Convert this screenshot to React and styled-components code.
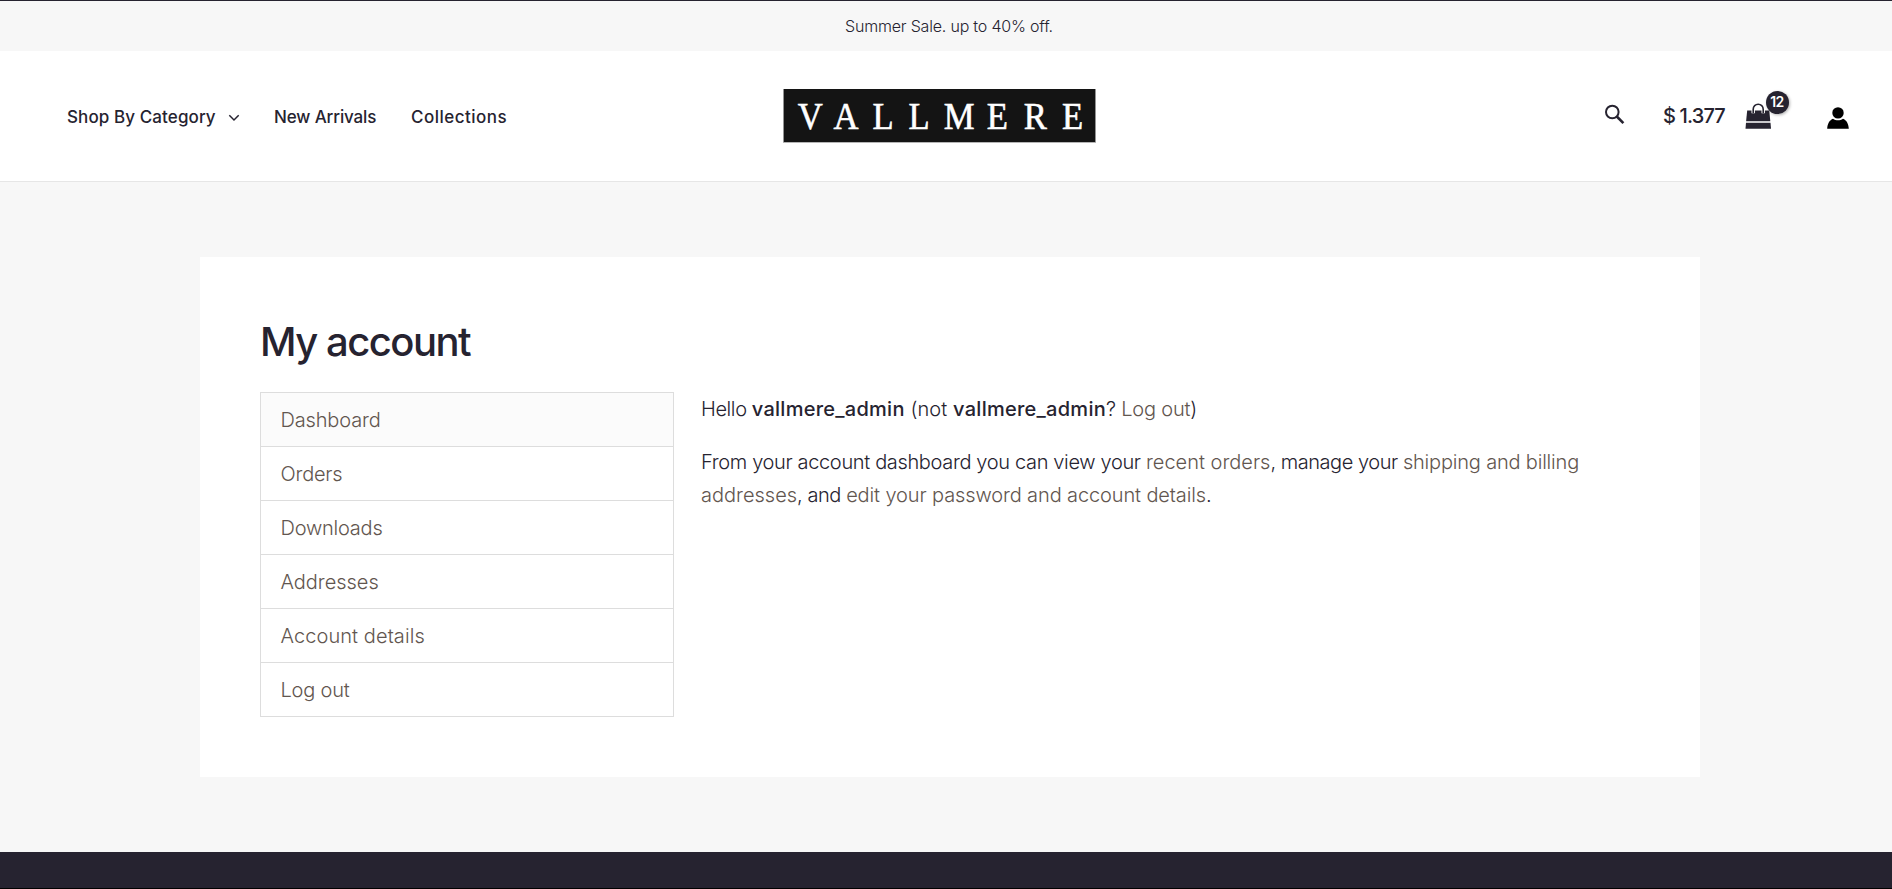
import React from 'react';
import styled, { createGlobalStyle } from 'styled-components';

const ink = '#262330';
const brown = '#62564f';

const GlobalStyle = createGlobalStyle`
  * { box-sizing: border-box; }
  body {
    margin: 0;
    background: #f7f7f7;
    color: ${ink};
    font-family: Inter, "Liberation Sans", sans-serif;
    font-weight: 300;
    overflow: hidden;
  }
`;

const Page = styled.div`
  display: flex;
  flex-direction: column;
  height: 889px;
  border-top: 1px solid ${ink};
`;

const Announcement = styled.div`
  height: 50px;
  flex: none;
  display: flex;
  align-items: center;
  justify-content: center;
  padding-left: 6px;
  font-size: 16px;
  letter-spacing: -0.2px;
`;

const Header = styled.header`
  height: 131px;
  flex: none;
  display: grid;
  grid-template-columns: 783px 313px 1fr;
  align-items: center;
  background: #fff;
  border-bottom: 1px solid #e6e6e6;
`;

const Nav = styled.nav`
  display: flex;
  align-items: center;
  padding: 2px 0 0 67px;
  font-size: 17px;
  font-weight: 500;
  line-height: 24px;
`;

const NavLink = styled.a`
  display: flex;
  align-items: center;
  width: ${(p) => p.$width}px;
  letter-spacing: ${(p) => p.$tracking}px;
  white-space: nowrap;
`;

const Chevron = styled.svg`
  margin: 2px 0 0 12px;
`;

const Logo = styled.svg`
  display: block;
  margin-bottom: 1px;
`;

const Actions = styled.div`
  display: flex;
  align-items: center;
  height: 60px;
`;

const SearchIcon = styled.svg`
  margin: 0 38px 4px 508px;
`;

const Price = styled.span`
  width: 82px;
  font-size: 20px;
  font-weight: 500;
  letter-spacing: -0.85px;
  white-space: nowrap;
`;

const Cart = styled.div`
  position: relative;
  width: 82px;
  height: 26px;
`;

const Badge = styled.span`
  position: absolute;
  left: 20.5px;
  top: -12px;
  width: 23px;
  height: 23px;
  border-radius: 50%;
  background: ${ink};
  color: #fff;
  font-size: 14px;
  font-weight: 600;
  line-height: 22px;
  text-align: center;
  letter-spacing: -0.6px;
  box-shadow: 1px 1px 3px rgba(0, 0, 0, 0.3);
`;

const UserIcon = styled.svg`
  margin-top: 4px;
`;

const Main = styled.main`
  flex: 1;
  padding: 75px 192px 0 200px;
`;

const Card = styled.section`
  height: 520px;
  padding: 60px;
  background: #fff;
`;

const Title = styled.h1`
  margin: 0;
  font-size: 40px;
  font-weight: 500;
  line-height: 49px;
  letter-spacing: -1.5px;
`;

const Columns = styled.div`
  display: flex;
  margin-top: 26px;
  gap: 27px;
`;

const Menu = styled.ul`
  width: 414px;
  margin: 0;
  padding: 0;
  list-style: none;
  border: 1px solid #dddddd;
  font-size: 20px;
  color: ${brown};
`;

const MenuItem = styled.li`
  height: ${(p) => (p.$last ? 53 : 54)}px;
  padding-left: 19.5px;
  line-height: 55px;
  letter-spacing: ${(p) => p.$tracking}px;
  background: ${(p) => (p.$active ? '#fbfbfb' : '#fff')};
  border-bottom: ${(p) => (p.$last ? 0 : 1)}px solid #dddddd;
`;

const Content = styled.div`
  flex: 1;
  padding-top: 1px;
  font-size: 20px;
  line-height: 33px;
`;

const Paragraph = styled.p`
  margin: 0 0 20px;
`;

const Run = styled.span`
  letter-spacing: ${(p) => p.$tracking}px;
`;

const Name = styled.strong`
  font-weight: 500;
  letter-spacing: 0.26px;
`;

const Link = styled.a`
  color: ${brown};
  letter-spacing: ${(p) => p.$tracking}px;
`;

const Footer = styled.footer`
  height: 37px;
  flex: none;
  background: ${ink};
  border-bottom: 1px solid #000;
`;

const menu = [
  ['Dashboard', -0.15],
  ['Orders', -0.2],
  ['Downloads', -0.22],
  ['Addresses', -0.03],
  ['Account details', 0.08],
  ['Log out', -0.18],
];

export default function App() {
  return (
    <Page>
      <GlobalStyle />
      <Announcement>Summer Sale. up to 40% off.</Announcement>
      <Header>
        <Nav>
          <NavLink $width={207} $tracking={0.1}>
            Shop By Category
            <Chevron width="12" height="8" viewBox="0 0 12 8" fill="none" stroke={ink} strokeWidth="1.5">
              <path d="M1.3 1.3 6 6l4.7-4.7" />
            </Chevron>
          </NavLink>
          <NavLink $width={137} $tracking={-0.13}>New Arrivals</NavLink>
          <NavLink $width={100} $tracking={0.48}>Collections</NavLink>
        </Nav>
        <Logo width="313" height="54" viewBox="0 0 313 54">
          <rect width="313" height="54" fill="#b5b5b5" />
          <rect x="0.8" width="311.4" height="53" fill="#141414" />
          <text
            transform="scale(.9 1)"
            x="16.5 56 99.5 139.5 178.5 226.5 267.5 310"
            y="40"
            fill="#fff"
            stroke="#fff"
            strokeWidth="0.6"
            fontFamily="'Liberation Serif', serif"
            fontSize="38.5"
          >
            VALLMERE
          </text>
        </Logo>
        <Actions>
          <SearchIcon width="21" height="21" viewBox="0 0 21 21" fill="none" stroke={ink}>
            <circle cx="8.3" cy="8" r="6.3" strokeWidth="2" />
            <path d="m12.8 12.5 6.6 6.6" strokeWidth="2.6" />
          </SearchIcon>
          <Price>$ 1.377</Price>
          <Cart>
            <svg width="27" height="26" viewBox="0 0 27 26">
              <path d="M2.2 7.5H24.3L25.3 18.3H1.1Z" fill={ink} />
              <path d="M1 19.7H25.5L26 25.8H.5Z" fill={ink} />
              <path d="M8.2 10.3V6.2a5 5 0 0 1 10 0v4.1" fill="none" stroke="#fff" strokeWidth="3.4" />
              <path d="M8.2 10V6.2a5 5 0 0 1 10 0V10" fill="none" stroke={ink} strokeWidth="1.6" />
            </svg>
            <Badge>12</Badge>
          </Cart>
          <UserIcon width="22" height="22" viewBox="0 0 22 22">
            <circle cx="11" cy="5.9" r="5.7" />
            <path d="M.2 21.8C.4 16.5 2.7 13 6 11.7c2.9 2.2 7.1 2.2 10 0 3.3 1.3 5.6 4.8 5.8 10.1Z" />
          </UserIcon>
        </Actions>
      </Header>
      <Main>
        <Card>
          <Title>My account</Title>
          <Columns>
            <Menu>
              {menu.map(([label, tracking], i) => (
                <MenuItem key={label} $tracking={tracking} $active={i === 0} $last={i === menu.length - 1}>
                  {label}
                </MenuItem>
              ))}
            </Menu>
            <Content>
              <Paragraph>
                <Run $tracking={-0.4}>Hello </Run>
                <Name>vallmere_admin</Name>
                <Run $tracking={0.1}> (not </Run>
                <Name>vallmere_admin</Name>
                <Run $tracking={-0.2}>? </Run>
                <Link $tracking={-0.2}>Log out</Link>)
              </Paragraph>
              <Paragraph>
                <Run $tracking={-0.348}>From your account dashboard you can view your </Run>
                <Link $tracking={0}>recent orders</Link>
                <Run $tracking={-0.46}>, manage your </Run>
                <Link $tracking={-0.19}>shipping and billing</Link>{' '}
                <Link $tracking={0}>addresses</Link>
                <Run $tracking={-0.44}>, and </Run>
                <Link $tracking={-0.12}>edit your password and account details</Link>.
              </Paragraph>
            </Content>
          </Columns>
        </Card>
      </Main>
      <Footer />
    </Page>
  );
}
